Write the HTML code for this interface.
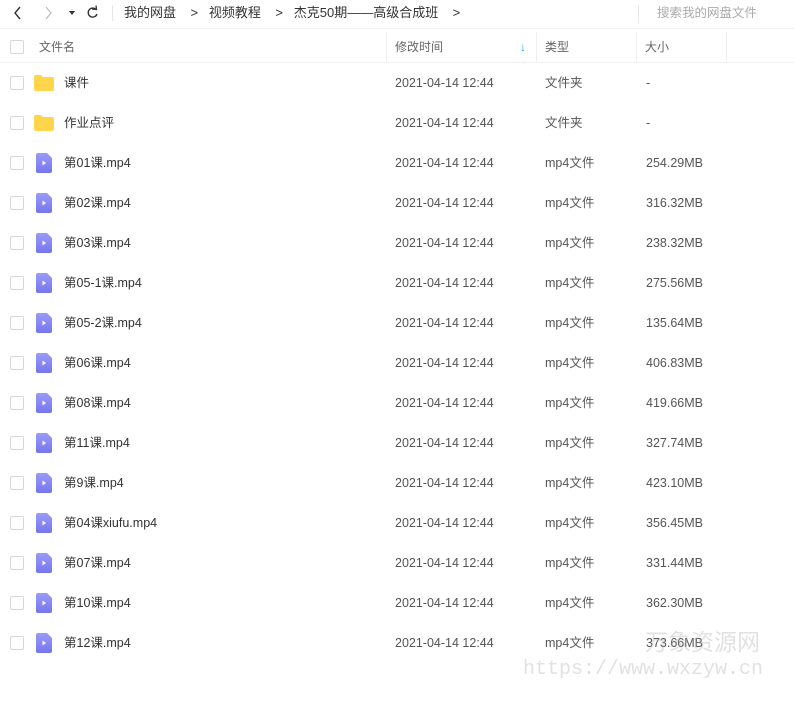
<!DOCTYPE html>
<html><head><meta charset="utf-8"><style>
body{margin:0;width:794px;height:706px;background:#fff;font-family:"Liberation Sans","Noto Sans CJK SC",sans-serif;font-size:12px;color:#424e67;position:relative;overflow:hidden}
.a{position:absolute;white-space:nowrap;line-height:16px}
.cb{position:absolute;left:10px;width:12px;height:12px;border:1px solid #d4d7de;border-radius:2px;background:#fff}
.hdr{position:absolute;top:32px;left:0;width:794px;height:30px;border-bottom:1px solid #f0f0f2}
.sep{position:absolute;top:32px;height:30px;width:1px;background:#eeeff2}
.t{color:#666}
</style></head><body>
<svg class="a" style="left:12px;top:5px" width="100" height="16" viewBox="0 0 100 16">
<path d="M8 2 L3 8 L8 14" stroke="#333" stroke-width="1.4" fill="none"/>
<path d="M34 2 L39 8 L34 14" stroke="#bbb" stroke-width="1.2" fill="none"/>
<path d="M57 6 L63 6 L60 10Z" fill="#333"/>
<path d="M84 4.5 A4.5 4.5 0 1 0 85 9" stroke="#333" stroke-width="1.4" fill="none"/>
<path d="M80 4 L84.5 4.5 L84 0.5" stroke="#333" stroke-width="1.3" fill="none"/>
</svg>
<div class="a" style="left:112px;top:5px;width:1px;height:16px;background:#e6e6e6"></div>
<div class="a" style="left:124px;top:5px;font-size:13px;color:#333">我的网盘 &nbsp;&nbsp; &gt; &nbsp;&nbsp;视频教程 &nbsp;&nbsp; &gt; &nbsp;&nbsp;杰克50期——高级合成班 &nbsp;&nbsp; &gt;</div>
<div class="a" style="left:638px;top:5px;width:1px;height:18px;background:#e6e6e6"></div>
<div class="a" style="left:657px;top:5px;color:#aaa;font-size:12.5px">搜索我的网盘文件</div>
<div class="a" style="left:0;top:28px;width:794px;height:1px;background:#f2f2f2"></div>
<div class="hdr"></div>
<div class="sep" style="left:386px"></div><div class="sep" style="left:536px"></div><div class="sep" style="left:636px"></div><div class="sep" style="left:726px"></div>
<div class="cb" style="top:40px"></div>
<div class="a t" style="left:39px;top:39px">文件名</div>
<div class="a t" style="left:395px;top:39px">修改时间</div>
<div class="a" style="left:520px;top:39px;color:#09aaff;font-size:12px;font-weight:bold">&#8595;</div>
<div class="a t" style="left:545px;top:39px">类型</div>
<div class="a t" style="left:645px;top:39px">大小</div>
<svg width="0" height="0" style="position:absolute"><defs>
<linearGradient id="g" x1="0" y1="0" x2="0" y2="1"><stop offset="0" stop-color="#9a9bf8"/><stop offset="1" stop-color="#7576ee"/></linearGradient></defs></svg>
<div id="rows"></div>
<div class="a" style="left:645px;top:628px;font-size:23px;line-height:28px;color:rgba(170,170,170,.35)">万象资源网</div>
<div class="a" style="left:523px;top:658px;font-size:20px;line-height:24px;font-family:'Liberation Mono',monospace;color:rgba(170,170,170,.35)">https://www.wxzyw.cn</div>
<script>
var d=[["课件","文件夹","-",1],["作业点评","文件夹","-",1],["第01课.mp4","mp4文件","254.29MB"],["第02课.mp4","mp4文件","316.32MB"],["第03课.mp4","mp4文件","238.32MB"],["第05-1课.mp4","mp4文件","275.56MB"],["第05-2课.mp4","mp4文件","135.64MB"],["第06课.mp4","mp4文件","406.83MB"],["第08课.mp4","mp4文件","419.66MB"],["第11课.mp4","mp4文件","327.74MB"],["第9课.mp4","mp4文件","423.10MB"],["第04课xiufu.mp4","mp4文件","356.45MB"],["第07课.mp4","mp4文件","331.44MB"],["第10课.mp4","mp4文件","362.30MB"],["第12课.mp4","mp4文件","373.66MB"]];
var h="";d.forEach(function(r,i){var c=83+40*i;
h+='<div class="cb" style="top:'+(c-7)+'px"></div>';
if(r[3])h+='<svg class="a" style="left:34px;top:'+(c-8)+'px" width="20" height="16"><path d="M0 2 Q0 0 2 0 L7 0 L9 2 L18 2 Q20 2 20 4 L20 14 Q20 16 18 16 L2 16 Q0 16 0 14Z" fill="#ffd54c"/></svg>';
else h+='<svg class="a" style="left:36px;top:'+(c-10)+'px" width="16" height="20"><path d="M2 0 L11 0 L16 5 L16 18 Q16 20 14 20 L2 20 Q0 20 0 18 L0 2 Q0 0 2 0Z" fill="url(#g)"/><path d="M6.5 7.5 L10 10 L6.5 12.5Z" fill="#fff"/></svg>';
h+='<div class="a" style="left:64px;top:'+(c-8)+'px;font-size:12.5px;color:#333">'+r[0]+'</div>';
h+='<div class="a" style="left:395px;top:'+(c-8)+'px;font-size:12.5px;color:#555">2021-04-14 12:44</div>';
h+='<div class="a" style="left:545px;top:'+(c-8)+'px;font-size:12.5px;color:#555">'+r[1]+'</div>';
h+='<div class="a" style="left:646px;top:'+(c-8)+'px;font-size:12.5px;color:#555">'+r[2]+'</div>';});
document.getElementById("rows").innerHTML=h;
</script>
</body></html>
